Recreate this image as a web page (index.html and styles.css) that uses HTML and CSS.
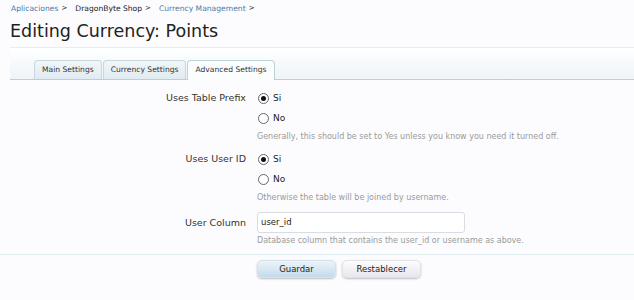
FILE: index.html
```html
<!DOCTYPE html>
<html>
<head>
<meta charset="utf-8">
<link rel="stylesheet" href="styles.css">
</head>
<body>
<div class="crumbs">
  <span class="crumb"><a class="link">Aplicaciones</a><span class="arrow">&gt;</span></span>
  <span class="crumb"><span>DragonByte Shop</span><span class="arrow">&gt;</span></span>
  <span class="crumb"><a class="link">Currency Management</a><span class="arrow">&gt;</span></span>
</div>
<h1 class="title">Editing Currency: Points</h1>
<div class="tabbar">
  <span class="tab">Main Settings</span>
  <span class="tab">Currency Settings</span>
  <span class="tab active">Advanced Settings</span>
</div>
<form class="form">
  <div class="row">
    <div class="label">Uses Table Prefix</div>
    <div class="ctrl">
      <label class="opt"><span class="radio checked"></span>Si</label>
      <label class="opt"><span class="radio"></span>No</label>
      <p class="explain">Generally, this should be set to Yes unless you know you need it turned off.</p>
    </div>
  </div>
  <div class="row">
    <div class="label">Uses User ID</div>
    <div class="ctrl">
      <label class="opt"><span class="radio checked"></span>Si</label>
      <label class="opt"><span class="radio"></span>No</label>
      <p class="explain">Otherwise the table will be joined by username.</p>
    </div>
  </div>
  <div class="row row-text">
    <div class="label label-text">User Column</div>
    <div class="ctrl">
      <div class="input">user_id</div>
      <p class="explain explain-text">Database column that contains the user_id or username as above.</p>
    </div>
  </div>
  <div class="submit">
    <span class="btn primary">Guardar</span>
    <span class="btn">Restablecer</span>
  </div>
</form>
</body>
</html>
```
FILE: styles.css
```css
html, body {
  margin: 0;
  padding: 0;
  background: #fcfcfe;
}
body {
  font-family: "DejaVu Sans", sans-serif;
  color: #222;
  width: 634px;
  height: 300px;
  overflow: hidden;
}
.crumbs {
  padding: 3px 10px 0 11px;
  font-size: 7.6px;
  line-height: 11px;
  display: flex;
  gap: 8px;
}
.crumb { color: #222; display: flex; gap: 3px; }
.link { color: #4c79a8; }
.arrow { font-size: 7px; }
.title {
  margin: 6px 0 0 10px;
  font-weight: normal;
  font-size: 17.5px;
  line-height: 23px;
  color: #222;
}
.tabbar {
  margin: 4px 0 0 10px;
  height: 31px;
  border-top: 1px solid #e7edf0;
  border-bottom: 1px solid #b9d1d3;
  background: linear-gradient(#ffffff, #eef4f8);
  padding-left: 24px;
  display: flex;
  align-items: flex-end;
  gap: 1px;
}
.tab {
  font-size: 7.6px;
  line-height: 18px;
  height: 18px;
  padding: 0 7px;
  color: #333;
  border: 1px solid #c6d8de;
  border-bottom: none;
  border-radius: 4px 4px 0 0;
  background: linear-gradient(#f1f6f9, #e0ebf1);
}
.tab.active {
  background: #fcfdfe;
  height: 19px;
  margin-bottom: -1px;
  border-color: #bcd3d6;
}
.form {
  padding-top: 8px;
}
.row {
  display: grid;
  grid-template-columns: 246px 1fr;
  column-gap: 11px;
  margin-bottom: 4px;
}
.row-text {
  margin-top: 6px;
}
.label {
  text-align: right;
  font-size: 9.5px;
  line-height: 20px;
  color: #333;
}
.label-text {
  line-height: 21px;
}
.ctrl {
  font-size: 9px;
}
.opt {
  display: flex;
  align-items: center;
  height: 20px;
  color: #222;
}
.radio {
  width: 9px;
  height: 9px;
  border: 1px solid #666;
  border-radius: 50%;
  margin: 0 4px 0 1px;
  background: #fff;
  display: inline-flex;
  align-items: center;
  justify-content: center;
}
.radio.checked::after {
  content: "";
  width: 5px;
  height: 5px;
  border-radius: 50%;
  background: #111;
}
.explain {
  margin: 1px 0 0;
  font-size: 8px;
  line-height: 16px;
  color: #9a9a9a;
}
.explain-text {
  margin-top: 0;
}
.input {
  width: 200px;
  height: 19px;
  line-height: 19px;
  padding: 0 3px;
  border: 1px solid #d8dde2;
  border-radius: 3px;
  background: #fff;
  color: #222;
  font-size: 8.5px;
}
.submit {
  border-top: 1px solid #dfecef;
  margin-top: 5px;
  padding: 5px 0 0 257px;
  display: flex;
  gap: 6px;
}
.btn {
  width: 77px;
  height: 16px;
  line-height: 16px;
  text-align: center;
  font-size: 8.5px;
  color: #222;
  border-radius: 5px;
  background: linear-gradient(#fdfdfe, #e6e6ee);
  box-shadow: 0 1px 2px rgba(0,0,0,0.25);
  border: 1px solid #e1e1e8;
}
.btn.primary {
  background: linear-gradient(#edf4f9, #c3dbec);
  border-color: #d3e3ee;
}
```
